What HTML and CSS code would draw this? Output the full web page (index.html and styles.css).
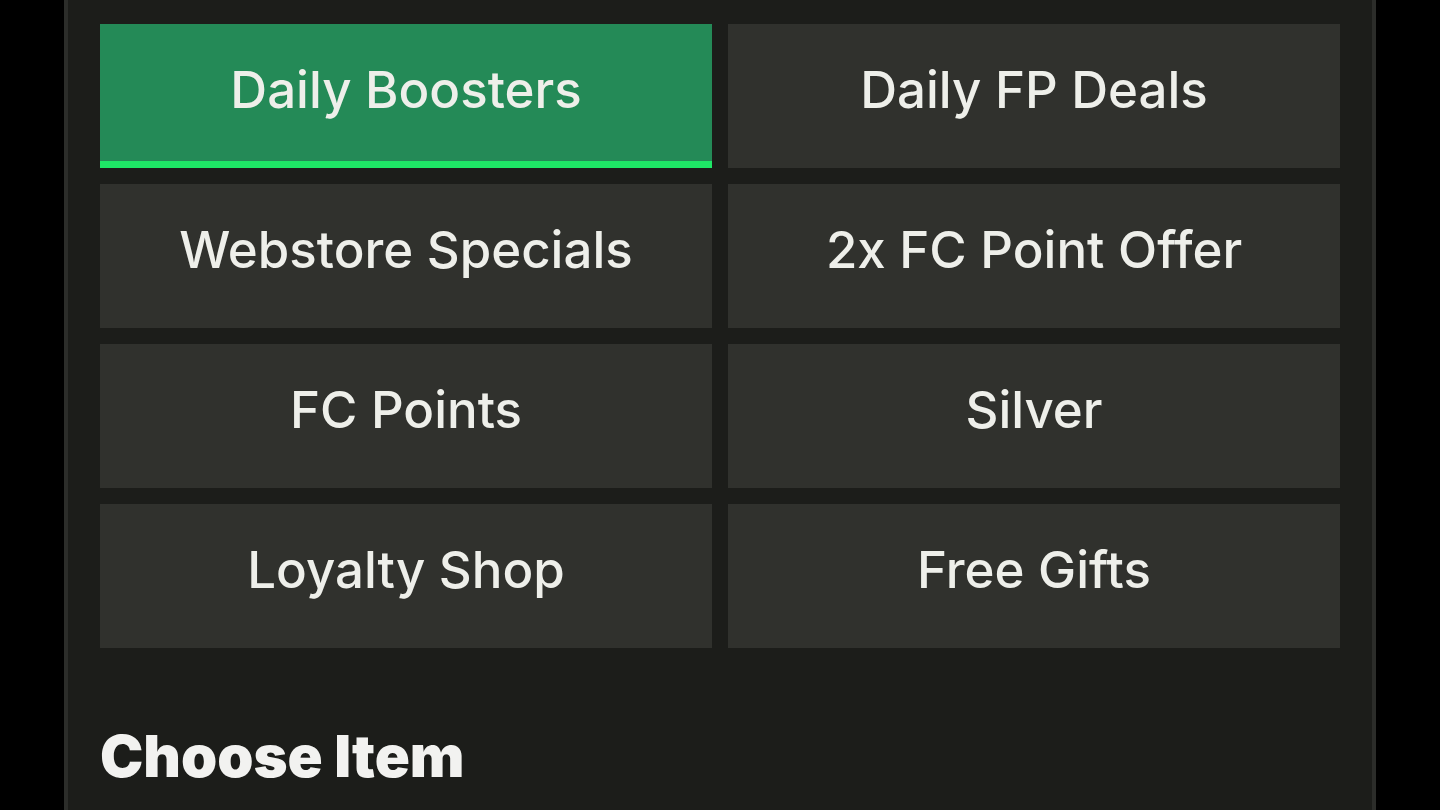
FILE: index.html
```html
<!DOCTYPE html>
<html>
<head>
<meta charset="UTF-8">
<title>Store</title>
<link rel="stylesheet" href="styles.css">
</head>

<body>
<div class="panel">
	<ul class="tabs">
		<li class="tab active">Daily Boosters</li>
		<li class="tab">Daily FP Deals</li>
		<li class="tab">Webstore Specials</li>
		<li class="tab">2x FC Point Offer</li>
		<li class="tab">FC Points</li>
		<li class="tab">Silver</li>
		<li class="tab">Loyalty Shop</li>
		<li class="tab">Free Gifts</li>
	</ul>
	<h2 class="title">Choose Item</h2>
</div>
</body>
</html>
```

FILE: styles.css
```css
*{ margin:0; padding:0; list-style:none; box-sizing:border-box;}
html,body{ height:100%;}
body{ background:#000; overflow:hidden; font-family:Inter, "Noto Sans", sans-serif;}
.panel{ width:1312px; min-height:100%; margin-left:64px; padding:24px 32px; background:#1c1d1a; border-left:4px solid #2c2d2a; border-right:4px solid #2c2d2a;}
.tabs{ display:grid; grid-template-columns:1fr 1fr; gap:16px;}
.tab{ height:144px; display:flex; align-items:center; justify-content:center; padding-bottom:14px; background:#30312d; color:#eeefea; font-size:51px; font-weight:500;}
.tab.active{ background:#248a57; border-bottom:7px solid #1ee866; padding-bottom:7px;}
.title{ margin-top:73px; color:#f2f2f0; font-size:58px; font-weight:900;}
```
